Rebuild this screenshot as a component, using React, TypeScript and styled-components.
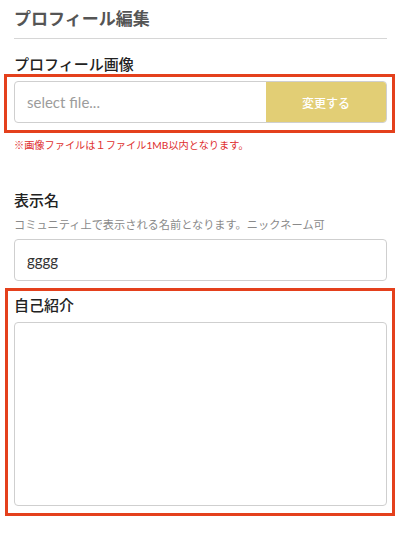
import React from 'react';
import styled, { createGlobalStyle } from 'styled-components';

const GlobalStyle = createGlobalStyle`
  body {
    margin: 0;
    background: #fff;
    font-family: "Lato", "Noto Sans CJK JP", sans-serif;
  }
  * { box-sizing: border-box; }
`;

const Page = styled.div`
  padding: 6px 13px 0 14px;
  font-family: "Lato", "Noto Sans CJK JP", sans-serif;
`;

const Heading = styled.h1`
  margin: 0;
  padding-bottom: 6px;
  border-bottom: 1px solid #d6d6d6;
  font-size: 17px;
  line-height: 26px;
  font-weight: 700;
  color: #555;
`;

const Label = styled.div<{ $top?: number }>`
  margin-top: ${(p) => p.$top ?? 0}px;
  font-size: 15px;
  line-height: 20px;
  font-weight: 500;
  color: #222;
`;

const Highlight = styled.div<{ $left: number; $top: number }>`
  margin: ${(p) => p.$top}px -8px 0 ${(p) => -p.$left}px;
  border: 3px solid #e4401c;
  padding: 4px 5px 7px ${(p) => p.$left - 3}px;
`;

const FileRow = styled.div`
  display: flex;
  height: 42px;
  border: 1px solid #cfcfcf;
  border-radius: 4px;
  overflow: hidden;
`;

const FileName = styled.div`
  flex: 1;
  display: flex;
  align-items: center;
  padding-left: 12px;
  font-size: 15px;
  color: #9c9c9c;
`;

const ChangeButton = styled.button`
  width: 120px;
  border: none;
  background: #e2ce75;
  color: #fff;
  font-family: inherit;
  font-size: 12px;
  font-weight: 500;
`;

const Note = styled.div`
  margin-top: 5px;
  font-size: 10.2px;
  line-height: 14px;
  color: #de2e2e;
`;

const Hint = styled.div`
  margin-top: 7px;
  font-size: 11.2px;
  line-height: 16px;
  color: #8a8a8a;
`;

const TextInput = styled.input`
  display: block;
  width: 100%;
  height: 42px;
  margin-top: 6px;
  padding: 0 12px;
  border: 1px solid #cfcfcf;
  border-radius: 4px;
  font-family: inherit;
  font-size: 15px;
  color: #333;
  outline: none;
`;

const TextArea = styled.textarea`
  display: block;
  width: 100%;
  height: 184px;
  margin-top: 7px;
  border: 1px solid #cfcfcf;
  border-radius: 4px;
  resize: none;
  outline: none;
  font-family: inherit;
`;

const App: React.FC = () => {
  return (
    <>
      <GlobalStyle />
      <Page>
        <Heading>プロフィール編集</Heading>

        <Label $top={15}>プロフィール画像</Label>
        <Highlight $left={10} $top={0}>
          <FileRow>
            <FileName>select file...</FileName>
            <ChangeButton>変更する</ChangeButton>
          </FileRow>
        </Highlight>
        <Note>※画像ファイルは１ファイル1MB以内となります。</Note>

        <Label $top={38}>表示名</Label>
        <Hint>コミュニティ上で表示される名前となります。ニックネーム可</Hint>
        <TextInput defaultValue="gggg" />

        <Highlight $left={9} $top={7}>
          <Label>自己紹介</Label>
          <TextArea />
        </Highlight>
      </Page>
    </>
  );
};

export default App;
